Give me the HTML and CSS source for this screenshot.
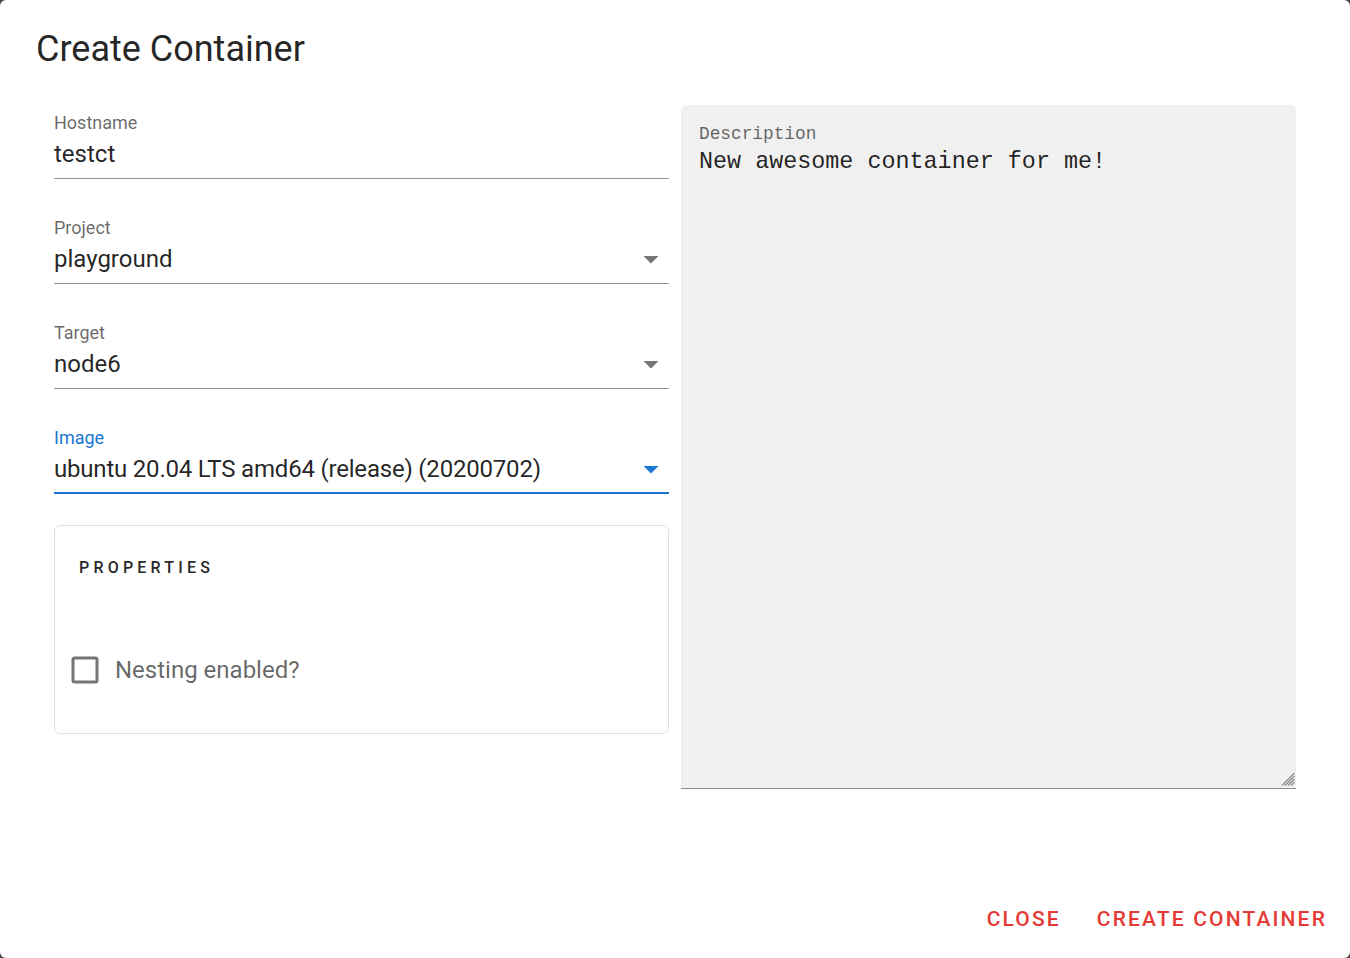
FILE: index.html
```html
<!DOCTYPE html>
<html lang="en">
<head>
<meta charset="utf-8">
<title>Create Container</title>
<link rel="stylesheet" href="styles.css">
</head>
<body>
<div class="dialog">
  <h1 class="title">Create Container</h1>
  <div class="content">
    <div class="col-left">
      <div class="fields">
        <div class="field">
          <div class="label">Hostname</div>
          <div class="control"><span class="value">testct</span></div>
        </div>
        <div class="field">
          <div class="label">Project</div>
          <div class="control"><span class="value">playground</span>
            <svg class="arrow" viewBox="0 0 24 24" width="36" height="36"><path d="M7 10l5 5 5-5z"/></svg>
          </div>
        </div>
        <div class="field">
          <div class="label">Target</div>
          <div class="control"><span class="value">node6</span>
            <svg class="arrow" viewBox="0 0 24 24" width="36" height="36"><path d="M7 10l5 5 5-5z"/></svg>
          </div>
        </div>
        <div class="field focused">
          <div class="label">Image</div>
          <div class="control"><span class="value">ubuntu 20.04 LTS amd64 (release) (20200702)</span>
            <svg class="arrow" viewBox="0 0 24 24" width="36" height="36"><path d="M7 10l5 5 5-5z"/></svg>
          </div>
        </div>
      </div>
      <div class="card">
        <div class="card-title">Properties</div>
        <label class="checkbox">
          <svg viewBox="0 0 24 24" width="36" height="36"><path d="M19 3H5C3.89 3 3 3.89 3 5v14a2 2 0 0 0 2 2h14a2 2 0 0 0 2-2V5c0-1.110-.9-2-2-2m0 2v14H5V5h14z"/></svg>
          <span>Nesting enabled?</span>
        </label>
      </div>
    </div>
    <div class="desc">
      <div class="desc-label">Description</div>
      <textarea class="desc-input">New awesome container for me!</textarea>
      <svg class="grip" viewBox="0 0 14 14" width="14" height="14"><path d="M1 13.5L13.5 1M4 13.5L13.5 4M7 13.5L13.5 7M10 13.5L13.5 10"/></svg>
    </div>
  </div>
  <div class="actions">
    <button class="btn">Close</button>
    <button class="btn">Create Container</button>
  </div>
</div>
</body>
</html>
```

FILE: styles.css
```css
* { box-sizing: border-box; }
html, body { margin: 0; padding: 0; }
body {
  background: #444;
  font-family: Roboto, "Liberation Sans", Arial, sans-serif;
  color: rgba(0,0,0,.87);
}
.dialog {
  width: 1350px;
  height: 958px;
  background: #fff;
  border-radius: 6px;
  display: flex;
  flex-direction: column;
}
.title {
  margin: 0;
  padding: 25px 36px 14px;
  font-size: 36px;
  line-height: 48px;
  font-weight: 400;
  color: rgba(0,0,0,.87);
}
.content {
  padding: 18px 54px 0;
  display: grid;
  grid-template-columns: 1fr 1fr;
  column-gap: 12px;
}
.col-left {
  padding-top: 7px;
  display: flex;
  flex-direction: column;
}
.fields {
  display: flex;
  flex-direction: column;
  gap: 38px;
}
.label {
  font-size: 18px;
  line-height: 22px;
  padding-bottom: 2px;
  color: rgba(0,0,0,.6);
}
.control {
  display: flex;
  align-items: center;
  height: 43px;
  padding-bottom: 6px;
  border-bottom: 1px solid rgba(0,0,0,.42);
}
.value {
  flex: 1;
  font-size: 24px;
  line-height: 36px;
  color: rgba(0,0,0,.87);
}
.arrow { display: block; fill: rgba(0,0,0,.54); }
.focused .label { color: #1976d2; }
.focused .control { padding-bottom: 5px; border-bottom: 2px solid #1976d2; }
.focused .arrow { fill: #1976d2; }
.focused .value { letter-spacing: -0.2px; }

.card {
  margin-top: 31px;
  height: 209px;
  border: 1px solid #e0e0e0;
  border-radius: 6px;
  display: flex;
  flex-direction: column;
}
.card-title {
  padding: 30px 24px 0;
  font-size: 16px;
  line-height: 24px;
  font-weight: 500;
  letter-spacing: 4.2px;
  text-transform: uppercase;
  color: rgba(0,0,0,.87);
}
.checkbox {
  margin-top: 72px;
  padding-left: 12px;
  display: flex;
  align-items: center;
  gap: 12px;
  height: 36px;
}
.checkbox svg { display: block; fill: rgba(0,0,0,.54); }
.checkbox span {
  font-size: 24px;
  line-height: 36px;
  color: rgba(0,0,0,.6);
}

.desc {
  position: relative;
  height: 684px;
  background: #f0f0f0;
  border-radius: 6px 6px 0 0;
  border-bottom: 1px solid rgba(0,0,0,.42);
  padding: 18px 0 0 18px;
  display: flex;
  flex-direction: column;
  font-family: "Liberation Mono", "DejaVu Sans Mono", monospace;
}
.desc-label {
  font-size: 17.8px;
  line-height: 22px;
  padding-bottom: 2px;
  color: rgba(0,0,0,.6);
}
.desc-input {
  flex: 1;
  display: block;
  width: 100%;
  margin: 0;
  padding: 0;
  border: 0;
  outline: none;
  background: transparent;
  resize: none;
  font-family: "Liberation Mono", "DejaVu Sans Mono", monospace;
  font-size: 23.4px;
  line-height: 30px;
  color: rgba(0,0,0,.87);
}
.grip {
  position: absolute;
  right: 1px;
  bottom: 2px;
  fill: none;
  stroke: #8a8a8a;
  stroke-width: 1.2;
}

.actions {
  margin-top: auto;
  display: flex;
  justify-content: flex-end;
  gap: 12px;
  padding: 0 11px 12px;
}
.btn {
  height: 54px;
  padding: 0 12px;
  border: 0;
  background: none;
  font-family: Roboto, "Liberation Sans", Arial, sans-serif;
  font-size: 21px;
  font-weight: 500;
  letter-spacing: 2.15px;
  text-transform: uppercase;
  color: #e53935;
  cursor: pointer;
}
```
